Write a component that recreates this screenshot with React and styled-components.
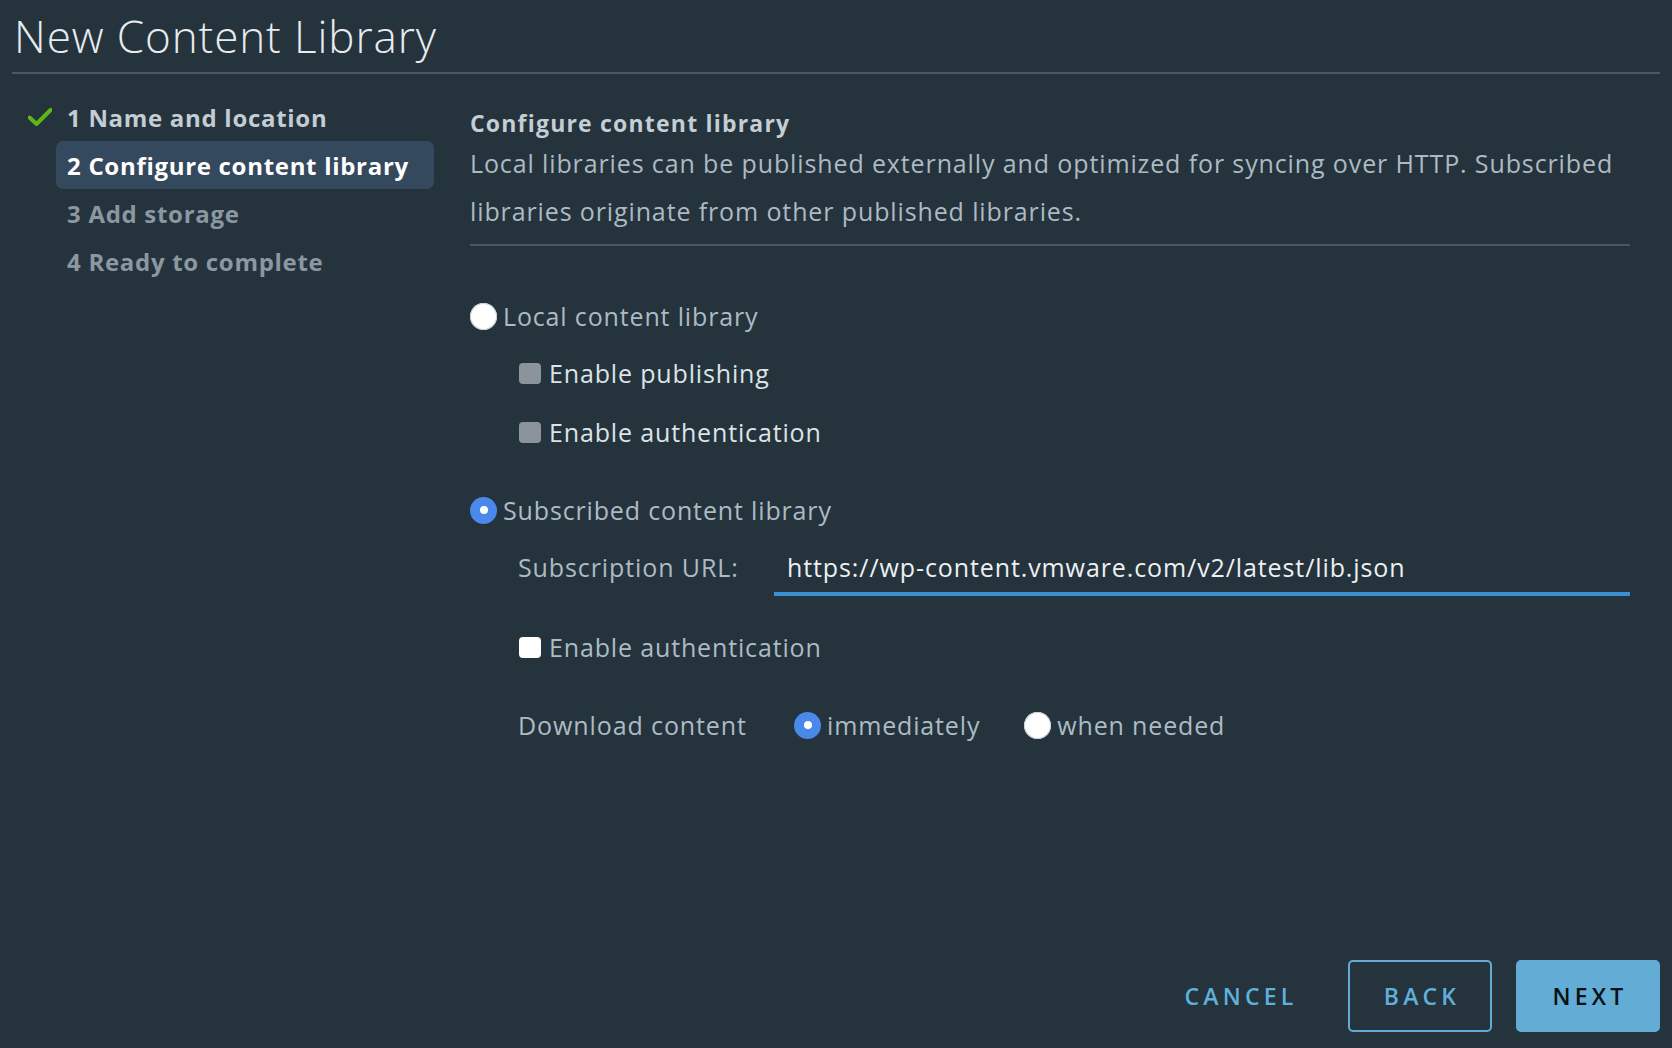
import React from 'react'
import styled, { createGlobalStyle } from 'styled-components'

const GlobalStyle = createGlobalStyle`
  * { box-sizing: border-box; }
  html, body {
    margin: 0;
    padding: 0;
    background: #25333d;
  }
  body {
    font-family: "Open Sans", "Liberation Sans", sans-serif;
  }
`

const Page = styled.div`
  height: 100vh;
  display: flex;
  flex-direction: column;
  padding: 6px 12px 16px 12px;
`

const Header = styled.div`
  border-bottom: 2px solid #4b5966;
  padding: 0 0 6px 2px;
`

const Title = styled.h1`
  margin: 0;
  font-size: 44px;
  font-weight: 300;
  line-height: 60px;
  letter-spacing: 0.9px;
  color: #e8ebee;
`

const Body = styled.div`
  flex: 1;
  display: grid;
  grid-template-columns: 458px 1fr;
`

const Sidebar = styled.div`
  padding-top: 19px;
`

const StepRow = styled.div`
  display: flex;
  align-items: center;
  height: 48px;
`

const IconCell = styled.div`
  width: 44px;
  display: flex;
  justify-content: flex-end;
  padding-right: 4px;
`

const StepLabel = styled.div`
  width: 378px;
  height: 48px;
  display: flex;
  align-items: center;
  padding-left: 11px;
  border-radius: 7px;
  font-size: 24px;
  font-weight: 700;
  letter-spacing: 0.7px;
  background: ${p => (p.$active ? '#34495d' : 'transparent')};
  color: ${p => (p.$active ? '#ffffff' : p.$done ? '#c3cdd3' : '#8b98a1')};
`

const Content = styled.div`
  padding: 33px 30px 0 0;
`

const Heading = styled.div`
  font-size: 23px;
  font-weight: 700;
  line-height: 32px;
  letter-spacing: 1.2px;
  color: #c4ced4;
`

const Para = styled.p`
  margin: 0;
  font-size: 25px;
  line-height: 48px;
  letter-spacing: 0.88px;
  color: #adbac3;
`

const Divider = styled.div`
  margin-top: 9px;
  height: 2px;
  background: #4b5966;
`

const Row = styled.div`
  display: flex;
  align-items: ${p => (p.$top ? 'flex-start' : 'center')};
  min-height: 40px;
  margin-top: ${p => p.$mt}px;
  padding-left: ${p => (p.$indent ? 48 : 0)}px;
`

const Radio = styled.span`
  flex: none;
  width: 27px;
  height: 27px;
  border-radius: 50%;
  display: flex;
  align-items: center;
  justify-content: center;
  background: ${p => (p.$on ? '#4a89ea' : '#ffffff')};
  box-shadow: ${p => (p.$on ? 'none' : 'inset 0 0 0 1px #c9d0d5')};
  &::after {
    content: '';
    display: ${p => (p.$on ? 'block' : 'none')};
    width: 8px;
    height: 8px;
    border-radius: 50%;
    background: #ffffff;
  }
`

const Check = styled.span`
  flex: none;
  width: 22px;
  height: 21px;
  border-radius: 4px;
  margin-left: 1px;
  background: ${p => (p.$disabled ? '#8b949a' : '#ffffff')};
`

const Label = styled.span`
  font-size: 25px;
  letter-spacing: 0.85px;
  line-height: 40px;
  color: ${p => (p.$bright ? '#dde3e7' : '#adbbc4')};
  margin-left: ${p => p.$gap || 6}px;
`

const FieldLabel = styled.span`
  width: ${p => p.$w}px;
  flex: none;
  font-size: 25px;
  letter-spacing: 0.9px;
  line-height: 44px;
  color: #adbbc4;
`

const Field = styled.div`
  flex: 1;
  height: 51px;
  padding: 0 0 3px 13px;
  border-bottom: 4px solid #3d8fd3;
  font-size: 25px;
  letter-spacing: 0.9px;
  line-height: 44px;
  color: #edf0f2;
`

const Choice = styled.div`
  display: flex;
  align-items: center;
  margin-right: ${p => p.$mr || 0}px;
`

const Footer = styled.div`
  display: flex;
  justify-content: flex-end;
  align-items: center;
  gap: 24px;
`

const Button = styled.button`
  width: 144px;
  height: 72px;
  border-radius: 5px;
  font-family: inherit;
  font-size: 23px;
  font-weight: 600;
  letter-spacing: 4.2px;
  padding: 0 0 0 4px;
  cursor: pointer;
  border: 2px solid ${p => (p.$variant === 'link' ? 'transparent' : '#62acd5')};
  background: ${p => (p.$variant === 'primary' ? '#62acd5' : 'transparent')};
  color: ${p => (p.$variant === 'primary' ? '#0b1013' : '#5fb0dc')};
  margin-right: ${p => p.$mr || 0}px;
`

const CheckMark = () => (
  <svg width="24" height="18" viewBox="0 0 24 18">
    <path d="M1.5 9.5 L8.5 16 L22.5 2" fill="none" stroke="#5eb715" strokeWidth="4" strokeLinecap="round" strokeLinejoin="round" />
  </svg>
)

const steps = [
  { n: 1, text: 'Name and location', done: true },
  { n: 2, text: 'Configure content library', active: true },
  { n: 3, text: 'Add storage' },
  { n: 4, text: 'Ready to complete' },
]

const App = () => {
  return (
    <>
      <GlobalStyle />
      <Page>
        <Header>
          <Title>New Content Library</Title>
        </Header>
        <Body>
          <Sidebar>
            {steps.map(s => (
              <StepRow key={s.n}>
                <IconCell>{s.done && <CheckMark />}</IconCell>
                <StepLabel $active={s.active} $done={s.done}>
                  {s.n} {s.text}
                </StepLabel>
              </StepRow>
            ))}
          </Sidebar>
          <Content>
            <Heading>Configure content library</Heading>
            <Para>
              Local libraries can be published externally and optimized for syncing over HTTP. Subscribed
              <br />
              libraries originate from other published libraries.
            </Para>
            <Divider />

            <Row $mt={50}>
              <Radio />
              <Label>Local content library</Label>
            </Row>
            <Row $mt={17} $indent>
              <Check $disabled />
              <Label $bright $gap={8}>Enable publishing</Label>
            </Row>
            <Row $mt={19} $indent>
              <Check $disabled />
              <Label $bright $gap={8}>Enable authentication</Label>
            </Row>

            <Row $mt={38}>
              <Radio $on />
              <Label>Subscribed content library</Label>
            </Row>
            <Row $mt={15} $indent $top>
              <FieldLabel $w={256}>Subscription URL:</FieldLabel>
              <Field>https://wp-content.vmware.com/v2/latest/lib.json</Field>
            </Row>
            <Row $mt={31} $indent>
              <Check />
              <Label $gap={8}>Enable authentication</Label>
            </Row>
            <Row $mt={36} $indent>
              <FieldLabel $w={276}>Download content</FieldLabel>
              <Choice $mr={44}>
                <Radio $on />
                <Label>immediately</Label>
              </Choice>
              <Choice>
                <Radio />
                <Label>when needed</Label>
              </Choice>
            </Row>
          </Content>
        </Body>
        <Footer>
          <Button $variant="link" $mr={13}>CANCEL</Button>
          <Button>BACK</Button>
          <Button $variant="primary">NEXT</Button>
        </Footer>
      </Page>
    </>
  )
}

export default App
